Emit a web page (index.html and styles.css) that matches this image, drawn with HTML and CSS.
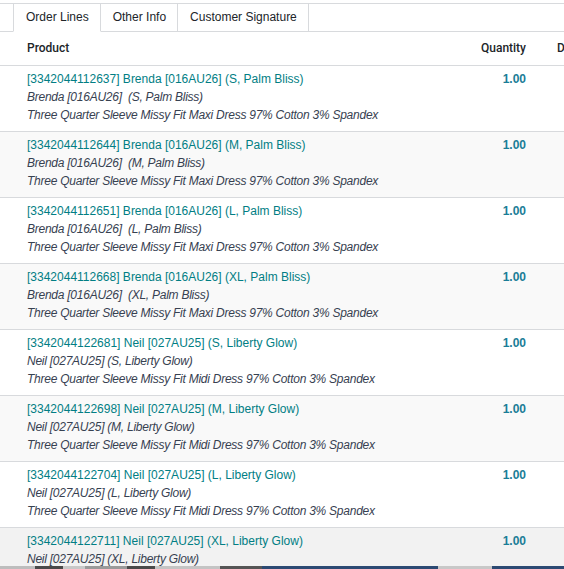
FILE: index.html
```html
<!DOCTYPE html>
<html>
<head>
<meta charset="utf-8">
<link rel="stylesheet" href="styles.css">
</head>
<body>
<div class="page">
  <div class="tabs">
    <div class="tab-gap"></div>
    <div class="tab active">Order Lines</div>
    <div class="tab">Other Info</div>
    <div class="tab">Customer Signature</div>
    <div class="tab-fill"></div>
  </div>
  <table class="lines">
    <colgroup>
      <col class="c-prod">
      <col class="c-qty">
      <col class="c-d">
    </colgroup>
    <thead>
      <tr><th class="prod">Product</th><th class="qty">Quantity</th><th class="d">D</th></tr>
    </thead>
    <tbody>
      <tr>
        <td class="prod"><div class="link">[3342044112637] Brenda [016AU26] (S, Palm Bliss)</div><div class="desc">Brenda [016AU26]&nbsp; (S, Palm Bliss)</div><div class="desc">Three Quarter Sleeve Missy Fit Maxi Dress 97% Cotton 3% Spandex</div></td>
        <td class="qty"><span class="num">1.00</span></td><td class="d"></td>
      </tr>
      <tr>
        <td class="prod"><div class="link">[3342044112644] Brenda [016AU26] (M, Palm Bliss)</div><div class="desc">Brenda [016AU26]&nbsp; (M, Palm Bliss)</div><div class="desc">Three Quarter Sleeve Missy Fit Maxi Dress 97% Cotton 3% Spandex</div></td>
        <td class="qty"><span class="num">1.00</span></td><td class="d"></td>
      </tr>
      <tr>
        <td class="prod"><div class="link">[3342044112651] Brenda [016AU26] (L, Palm Bliss)</div><div class="desc">Brenda [016AU26]&nbsp; (L, Palm Bliss)</div><div class="desc">Three Quarter Sleeve Missy Fit Maxi Dress 97% Cotton 3% Spandex</div></td>
        <td class="qty"><span class="num">1.00</span></td><td class="d"></td>
      </tr>
      <tr>
        <td class="prod"><div class="link">[3342044112668] Brenda [016AU26] (XL, Palm Bliss)</div><div class="desc">Brenda [016AU26]&nbsp; (XL, Palm Bliss)</div><div class="desc">Three Quarter Sleeve Missy Fit Maxi Dress 97% Cotton 3% Spandex</div></td>
        <td class="qty"><span class="num">1.00</span></td><td class="d"></td>
      </tr>
      <tr>
        <td class="prod"><div class="link">[3342044122681] Neil [027AU25] (S, Liberty Glow)</div><div class="desc">Neil [027AU25] (S, Liberty Glow)</div><div class="desc">Three Quarter Sleeve Missy Fit Midi Dress 97% Cotton 3% Spandex</div></td>
        <td class="qty"><span class="num">1.00</span></td><td class="d"></td>
      </tr>
      <tr>
        <td class="prod"><div class="link">[3342044122698] Neil [027AU25] (M, Liberty Glow)</div><div class="desc">Neil [027AU25] (M, Liberty Glow)</div><div class="desc">Three Quarter Sleeve Missy Fit Midi Dress 97% Cotton 3% Spandex</div></td>
        <td class="qty"><span class="num">1.00</span></td><td class="d"></td>
      </tr>
      <tr>
        <td class="prod"><div class="link">[3342044122704] Neil [027AU25] (L, Liberty Glow)</div><div class="desc">Neil [027AU25] (L, Liberty Glow)</div><div class="desc">Three Quarter Sleeve Missy Fit Midi Dress 97% Cotton 3% Spandex</div></td>
        <td class="qty"><span class="num">1.00</span></td><td class="d"></td>
      </tr>
      <tr class="hover">
        <td class="prod"><div class="link">[3342044122711] Neil [027AU25] (XL, Liberty Glow)</div><div class="desc">Neil [027AU25] (XL, Liberty Glow)</div><div class="desc">Three Quarter Sleeve Missy Fit Midi Dress 97% Cotton 3% Spandex</div></td>
        <td class="qty"><span class="num">1.00</span></td><td class="d"></td>
      </tr>
    </tbody>
  </table>
  <div class="footer-strip">
    <span class="s1"></span><span class="s2"></span><span class="s3"></span><span class="s4"></span><span class="s5"></span><span class="s6"></span><span class="s7"></span><span class="s8"></span><span class="s9"></span>
  </div>
</div>
</body>
</html>
```

FILE: styles.css
```css
html, body {
  margin: 0;
  padding: 0;
  background: #ffffff;
}
body {
  font-family: "Liberation Sans", Arial, sans-serif;
  font-size: 12px;
  color: #212529;
  overflow: hidden;
}
.page {
  position: relative;
  width: 564px;
  height: 569px;
  overflow: hidden;
  padding-top: 3px;
  box-sizing: border-box;
}
.tabs {
  display: flex;
  height: 29px;
  border-top: 1px solid #d8dadd;
  box-sizing: border-box;
}
.tab-gap {
  width: 13px;
  border-bottom: 1px solid #d8dadd;
}
.tab {
  display: flex;
  align-items: center;
  padding: 0 11px 1px 12px;
  border-right: 1px solid #d8dadd;
  border-bottom: 1px solid #d8dadd;
  color: #212529;
  white-space: nowrap;
}
.tab.active {
  border-left: 1px solid #d8dadd;
  border-bottom-color: transparent;
}
.tab-fill {
  flex: 1;
  border-bottom: 1px solid #d8dadd;
}
.lines {
  border-collapse: collapse;
  table-layout: fixed;
  width: 640px;
}
.c-prod { width: 440px; }
.c-qty { width: 94px; }
.c-d { width: 106px; }
th {
  height: 33px;
  padding: 0;
  font-family: Roboto, "Liberation Sans", sans-serif;
  font-weight: 500;
  text-align: left;
  border-bottom: 1px solid #d8dadd;
  color: #212529;
  vertical-align: middle;
  box-sizing: border-box;
}
th.prod { padding-left: 27px; }
th.qty { text-align: right; padding-right: 8px; }
th.d { padding-left: 23px; }
td {
  vertical-align: top;
  padding: 4px 0 7px 0;
  border-bottom: 1px solid #d8dadd;
  line-height: 18px;
}
td.prod { padding-left: 27px; white-space: nowrap; }
td.qty { text-align: right; padding-right: 8px; }
tbody tr:nth-child(even) { background: #f9f9f9; }
tbody tr.hover { background: #f2f2f2; }
.link { color: #017e84; }
.desc { font-style: italic; color: #374151; letter-spacing: -0.25px; }
.num { font-weight: 700; color: #1a7d97; }
.footer-strip {
  position: absolute;
  left: 0;
  bottom: 0;
  width: 564px;
  height: 3px;
  display: flex;
}
.footer-strip span { height: 3px; display: block; }
.s1 { width: 35px; background: #bdbdbd; }
.s2 { width: 28px; background: #4a4a4a; }
.s3 { width: 22px; background: #c8c8c8; }
.s4 { width: 42px; background: #9a9a9a; }
.s5 { width: 28px; background: #4a4a4a; }
.s6 { width: 65px; background: #c4c4c4; }
.s7 { width: 42px; background: #555555; }
.s8 { width: 176px; background: #2c4a73; }
.s9 { flex: 1; background: linear-gradient(to right, #c8c8c8 0, #c8c8c8 54px, #2c4a73 54px); }
```
